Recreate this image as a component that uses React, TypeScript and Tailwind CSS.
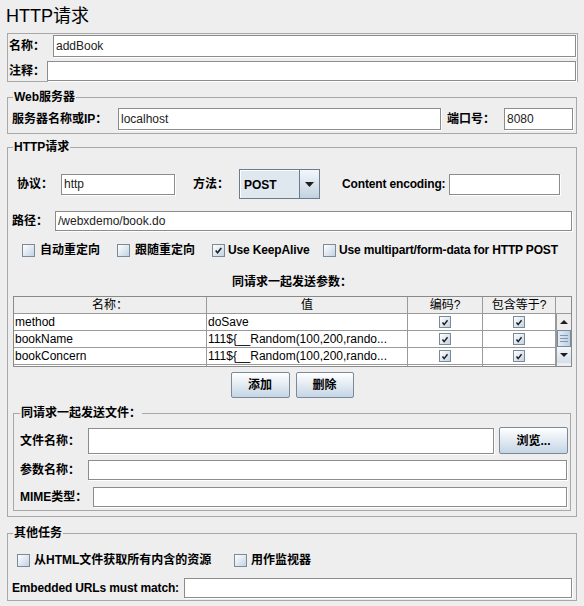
import React from "react";

function Field({ className = "", value = "" }: { className?: string; value?: string }) {
  return (
    <div
      className={`bg-white border border-[#8c8c8c] shadow-[1px_1px_0_#ffffff] flex items-center pl-[2px] text-[12px] leading-none whitespace-nowrap overflow-hidden text-[#222] font-normal tracking-normal ${className}`}
    >
      {value}
    </div>
  );
}

function Check() {
  return (
    <svg width="13" height="13" viewBox="0 0 13 13" className="block">
      <path d="M3.2 6.6 L5.4 9.2 L9.8 3.6" stroke="#1e1e1e" strokeWidth="1.9" fill="none" />
    </svg>
  );
}

function Box({ checked = false, small = false }: { checked?: boolean; small?: boolean }) {
  return (
    <div
      className={`${small ? "w-[12px] h-[12px]" : "w-[13px] h-[13px]"} shrink-0 border border-[#7a8a99] bg-linear-to-br from-[#ffffff] to-[#c3d3e3] flex items-center justify-center overflow-hidden`}
    >
      {checked ? <Check /> : null}
    </div>
  );
}

function Btn({ children, className = "" }: { children: React.ReactNode; className?: string }) {
  return (
    <div
      className={`flex items-center justify-center border border-[#7a8a99] rounded-[2px] bg-linear-to-b from-[#ffffff] to-[#c5d5e5] font-bold text-[12px] ${className}`}
    >
      {children}
    </div>
  );
}

const rows = [
  ["method", "doSave"],
  ["bookName", "111${__Random(100,200,rando..."],
  ["bookConcern", "111${__Random(100,200,rando..."],
  ["", ""],
];

export default function App() {
  return (
    <div className="w-[584px] h-[606px] bg-[#eeeeee] overflow-hidden flex flex-col font-['Liberation_Sans','Noto_Sans_CJK_SC',sans-serif] text-[12px] text-black">
      <div className="h-[33px] shrink-0 pl-[6px] pt-[4px] text-[18px] leading-[24px]">HTTP请求</div>

      {/* name / comment */}
      <div className="ml-[7px] w-[571px] h-[49px] shrink-0 border border-[#a8a8a8] flex flex-col pt-[1px]">
        <div className="flex h-[22px] items-center">
          <span className="w-[45px] pl-[1px] font-bold">名称：</span>
          <Field className="flex-1 h-[22px] mr-[1px]" value="addBook" />
        </div>
        <div className="flex h-[20px] items-center mt-[4px]">
          <span className="w-[39px] pl-[1px] font-bold">注释：</span>
          <Field className="flex-1 h-[20px] mr-[1px]" />
        </div>
      </div>

      {/* Web server */}
      <fieldset className="ml-[7px] w-[570px] mt-[8px] shrink-0 border border-[#a8a8a8] pb-[3px]">
        <legend className="ml-[5px] px-[1px] font-bold leading-[14px]">Web服务器</legend>
        <div className="flex items-center h-[22px] mt-[4px] pl-[4px] pr-[3px]">
          <span className="w-[106px] font-bold whitespace-nowrap">服务器名称或IP：</span>
          <Field className="w-[323px] h-[22px]" value="localhost" />
          <span className="ml-[6px] w-[57px] font-bold whitespace-nowrap">端口号：</span>
          <Field className="flex-1 h-[22px]" value="8080" />
        </div>
      </fieldset>

      {/* HTTP request */}
      <fieldset className="ml-[7px] w-[570px] mt-[6px] shrink-0 border border-[#a8a8a8] pb-[5px]">
        <legend className="ml-[5px] px-[1px] font-bold leading-[14px]">HTTP请求</legend>

        <div className="flex items-center h-[30px] mt-[15px] pl-[9px]">
          <span className="w-[44px] font-bold">协议：</span>
          <Field className="w-[114px] h-[21px]" value="http" />
          <span className="ml-[18px] w-[46px] font-bold">方法：</span>
          <div className="w-[81px] h-[30px] flex border border-[#6d7c8c] bg-[#dfe7ef]">
            <div className="flex-1 flex items-center pl-[3px] font-bold border-t border-l border-[#ffffff]">POST</div>
            <div className="w-[20px] border-l border-[#6d7c8c] bg-linear-to-b from-[#f3f7fb] to-[#c3d2e1] flex items-center justify-center">
              <svg width="9" height="5" viewBox="0 0 9 5" className="block">
                <path d="M0 0 H9 L4.5 5 Z" fill="#1e1e1e" />
              </svg>
            </div>
          </div>
          <span className="ml-[22px] w-[107px] font-bold whitespace-nowrap tracking-[-0.15px]">Content encoding:</span>
          <Field className="w-[111px] h-[21px]" />
        </div>

        <div className="flex items-center h-[20px] mt-[12px] pl-[4px] pr-[4px]">
          <span className="w-[43px] font-bold">路径：</span>
          <Field className="flex-1 h-[20px]" value="/webxdemo/book.do" />
        </div>

        <div className="flex items-center h-[16px] mt-[11px] pl-[14px] font-bold whitespace-nowrap">
          <div className="w-[95px] flex items-center gap-[5px]">
            <Box />
            <span>自动重定向</span>
          </div>
          <div className="w-[95px] flex items-center gap-[5px]">
            <Box />
            <span>跟随重定向</span>
          </div>
          <div className="w-[111px] flex items-center gap-[3px]">
            <Box checked />
            <span className="tracking-[-0.15px]">Use KeepAlive</span>
          </div>
          <div className="flex items-center gap-[3px]">
            <Box />
            <span className="tracking-[-0.17px]">Use multipart/form-data for HTTP POST</span>
          </div>
        </div>

        <div className="h-[16px] mt-[16px] flex items-center justify-center font-bold">同请求一起发送参数：</div>

        {/* table */}
        <div className="mt-[6px] ml-[5px] mr-[4px] h-[71px] border border-[#8a8a8a] flex flex-col overflow-hidden">
          <div className="h-[17px] shrink-0 flex border-b border-[#9a9a9a] bg-[#eeeeee]">
            <div className="w-[193px] border-r border-[#9a9a9a] flex items-center justify-center">名称：</div>
            <div className="w-[201px] border-r border-[#9a9a9a] flex items-center justify-center">值</div>
            <div className="w-[75px] border-r border-[#9a9a9a] flex items-center justify-center">编码?</div>
            <div className="w-[73px] border-r border-[#9a9a9a] flex items-center justify-center">包含等于?</div>
            <div className="flex-1" />
          </div>
          <div className="flex flex-1 overflow-hidden">
            <div className="w-[542px] flex flex-col bg-white">
              {rows.map((r, i) => (
                <div key={i} className="h-[17px] shrink-0 flex border-b border-[#9a9a9a]">
                  <div className="w-[193px] border-r border-[#9a9a9a] flex items-center pl-[1px] whitespace-nowrap">{r[0]}</div>
                  <div className="w-[201px] border-r border-[#9a9a9a] flex items-center pl-[1px] whitespace-nowrap overflow-hidden">{r[1]}</div>
                  <div className="w-[75px] border-r border-[#9a9a9a] flex items-center justify-center">
                    <Box checked small />
                  </div>
                  <div className="w-[73px] border-r border-[#9a9a9a] flex items-center justify-center">
                    <Box checked small />
                  </div>
                </div>
              ))}
            </div>
            <div className="flex-1 flex flex-col bg-[#eeeeee] border-l border-[#9a9a9a]">
              <div className="h-[16px] flex items-center justify-center">
                <svg width="8" height="4" viewBox="0 0 8 4" className="block">
                  <path d="M0 4 H8 L4 0 Z" fill="#1e1e1e" />
                </svg>
              </div>
              <div className="h-[17px] border border-[#7a8a99] bg-linear-to-r from-[#e4ecf4] to-[#bccfe2] flex flex-col items-center justify-center gap-[2px]">
                <div className="w-[8px] h-px bg-[#7f97b0]" />
                <div className="w-[8px] h-px bg-[#7f97b0]" />
                <div className="w-[8px] h-px bg-[#7f97b0]" />
              </div>
              <div className="h-[16px] flex items-center justify-center bg-linear-to-b from-[#f3f7fb] to-[#d3dfeb]">
                <svg width="8" height="4" viewBox="0 0 8 4" className="block">
                  <path d="M0 0 H8 L4 4 Z" fill="#1e1e1e" />
                </svg>
              </div>
            </div>
          </div>
        </div>

        <div className="mt-[5px] h-[26px] flex justify-center gap-[6px]">
          <Btn className="w-[59px] h-[26px]">添加</Btn>
          <Btn className="w-[58px] h-[26px]">删除</Btn>
        </div>

        {/* files */}
        <fieldset className="mt-[8px] ml-[5px] w-[558px] border border-[#a8a8a8] pb-[3px]">
          <legend className="ml-[6px] px-[1px] font-bold leading-[14px]">同请求一起发送文件：</legend>
          <div className="flex items-center h-[27px] mt-[7px] pl-[6px] pr-[2px]">
            <span className="w-[68px] font-bold">文件名称：</span>
            <Field className="flex-1 h-[26px]" />
            <Btn className="ml-[5px] w-[69px] h-[27px]">浏览...</Btn>
          </div>
          <div className="flex items-center h-[20px] mt-[6px] pl-[6px] pr-[3px]">
            <span className="w-[68px] font-bold">参数名称：</span>
            <Field className="flex-1 h-[20px]" />
          </div>
          <div className="flex items-center h-[20px] mt-[7px] pl-[6px] pr-[3px]">
            <span className="w-[73px] font-bold whitespace-nowrap">MIME类型：</span>
            <Field className="flex-1 h-[20px]" />
          </div>
        </fieldset>
      </fieldset>

      {/* other tasks */}
      <fieldset className="ml-[7px] w-[570px] mt-[9px] shrink-0 border border-[#a8a8a8] pb-[2px]">
        <legend className="ml-[5px] px-[1px] font-bold leading-[14px]">其他任务</legend>
        <div className="flex items-center h-[16px] mt-[12px] pl-[9px] font-bold whitespace-nowrap">
          <div className="w-[217px] flex items-center gap-[4px]">
            <Box />
            <span>从HTML文件获取所有内含的资源</span>
          </div>
          <div className="flex items-center gap-[4px]">
            <Box />
            <span>用作监视器</span>
          </div>
        </div>
        <div className="flex items-center h-[20px] mt-[10px] pl-[4px] pr-[4px]">
          <span className="w-[172px] font-bold whitespace-nowrap tracking-[-0.15px]">Embedded URLs must match:</span>
          <Field className="flex-1 h-[20px]" />
        </div>
      </fieldset>
    </div>
  );
}
